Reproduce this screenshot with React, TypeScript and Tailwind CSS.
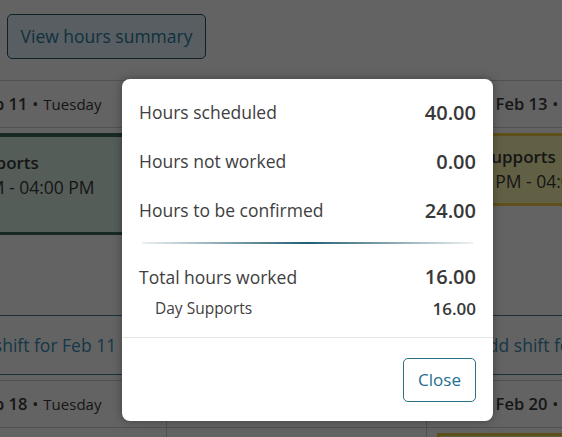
import React from "react";

const font = { fontFamily: '"Open Sans", "Noto Sans", sans-serif' };

function DayHeader({ date, day }: { date: string; day: string }) {
  return (
    <div className="flex h-[47px] items-center justify-center border-b border-[#cfcfcf] pl-[4px] text-[#3a3a3a]">
      <span className="text-[16.5px] font-semibold">{date}</span>
      <span className="mx-[5px] text-[16px]">•</span>
      <span className="text-[15px]">{day}</span>
    </div>
  );
}

function AddShift({ label }: { label: string }) {
  return (
    <div className="mx-[4px] mt-auto mb-[5px] flex h-[60px] items-center justify-center border-y border-[#3b7d94] text-[17.5px] text-[#3a8db3]">
      {label}
    </div>
  );
}

function Column({
  date1,
  date2,
  card,
  addLabel,
}: {
  date1: string;
  date2: string;
  card: "green" | "yellow";
  addLabel: string;
}) {
  return (
    <div className="w-[260px] shrink-0 border-r border-[#cfcfcf]">
      <DayHeader date={date1} day="Tuesday" />
      <div className="flex h-[253px] flex-col border-b border-[#cfcfcf]">
        {card === "green" ? (
          <div className="mx-[10px] mt-[5px] h-[102px] border-t-[4px] border-b-[3px] border-[#3f6b5b] bg-[#dcefe4] px-[12px] pt-[13px] text-[#3a3a3a]">
            <div className="text-[17px] font-semibold leading-[25px]">Day Supports</div>
            <div className="text-[17.5px] leading-[25px]">12:00 PM - 04:00 PM</div>
          </div>
        ) : (
          <div className="mx-[10px] mt-[5px] h-[73px] border-[3px] border-[#f2cd45] bg-[#fcf7b0] px-[6px] pt-[8px] text-[#3a3a3a]">
            <div className="text-[17px] font-semibold leading-[25px]">Day Supports</div>
            <div className="text-[17.5px] leading-[25px]">12:00 PM - 04:00 PM</div>
          </div>
        )}
        <AddShift label={addLabel} />
      </div>
      <DayHeader date={date2} day="Tuesday" />
      {card === "yellow" ? (
        <div className="mx-[10px] mt-[5px] h-[40px] border-[3px] border-[#f2cd45] bg-[#fcf7b0]" />
      ) : (
        <div className="mx-[10px] mt-[5px] h-[40px]" />
      )}
    </div>
  );
}

function Row({
  label,
  value,
  className = "",
}: {
  label: string;
  value: string;
  className?: string;
}) {
  return (
    <div className={`flex items-center justify-between ${className}`}>
      <span className="text-[17.5px] text-[#404040]">{label}</span>
      <span className="text-[20px] font-semibold text-[#383838]">{value}</span>
    </div>
  );
}

export default function App() {
  return (
    <div className="relative h-[437px] w-[562px] overflow-hidden bg-white" style={font}>
      <div className="px-[7px] pt-[14px]">
        <button className="flex h-[45px] w-[199px] items-center justify-center rounded-[5px] border border-[#2a5466] bg-[#e3f3f9] text-[17.5px] text-[#2e7da3]">
          View hours summary
        </button>
      </div>
      <div className="mt-[21px] ml-[-93px] flex border-t border-[#cfcfcf]">
        <Column date1="Feb 11" date2="Feb 18" card="green" addLabel="Add shift for Feb 11" />
        <Column date1="Feb 12" date2="Feb 19" card="green" addLabel="Add shift for Feb 12" />
        <Column date1="Feb 13" date2="Feb 20" card="yellow" addLabel="Add shift for Feb 13" />
      </div>

      <div className="absolute inset-0 bg-black/[0.61]" />

      <div className="absolute left-[122px] top-[79px] flex h-[342px] w-[371px] flex-col rounded-[8px] bg-white shadow-[0_0_10px_rgba(0,0,0,0.35)]">
        <div className="px-[17px] pt-[9px]">
          <Row label="Hours scheduled" value="40.00" className="h-[49px]" />
          <Row label="Hours not worked" value="0.00" className="h-[49px]" />
          <Row label="Hours to be confirmed" value="24.00" className="h-[49px]" />
        </div>
        <div className="mx-[20px] mt-[7px] h-[2px] bg-linear-to-r from-[#eef1f2] via-[#1c5f74] to-[#eef1f2]" />
        <div className="px-[17px] pt-[16px]">
          <Row label="Total hours worked" value="16.00" className="h-[34px]" />
          <div className="flex h-[29px] items-center justify-between">
            <span className="pl-[16px] text-[15.5px] text-[#404040]">Day Supports</span>
            <span className="text-[17px] font-semibold text-[#383838]">16.00</span>
          </div>
        </div>
        <div className="mt-[14px] flex flex-1 items-center justify-end border-t border-[#e3e3e3] px-[17px]">
          <button className="flex h-[44px] w-[73px] items-center justify-center rounded-[5px] border border-[#2a6f88] text-[17px] text-[#24708f]">
            Close
          </button>
        </div>
      </div>
    </div>
  );
}
